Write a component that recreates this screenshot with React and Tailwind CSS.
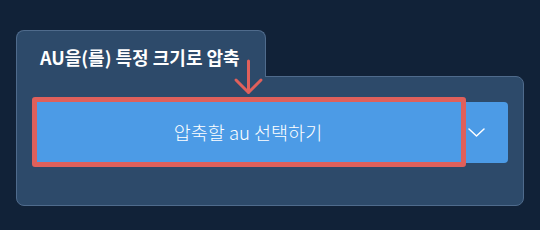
import React from 'react';

const ChevronDown = () => (
  <svg width="17" height="9" viewBox="0 0 17 9" fill="none">
    <polyline points="1,1 8.5,8 16,1" stroke="white" strokeWidth="1.5" strokeLinecap="round" strokeLinejoin="round" />
  </svg>
);

const DownArrow = () => (
  <svg width="31" height="36" viewBox="0 0 31 36" fill="none">
    <line x1="15.5" y1="2" x2="15.5" y2="33" stroke="#e0605b" strokeWidth="3" strokeLinecap="round" />
    <polyline points="3,21 15.5,33.5 28,21" stroke="#e0605b" strokeWidth="3" strokeLinecap="round" strokeLinejoin="round" />
  </svg>
);

const App = () => {
  return (
    <div
      className="w-[540px] h-[230px] bg-[#112238] pt-[30px] px-4"
      style={{ fontFamily: '"Noto Sans CJK KR", "Noto Sans", sans-serif' }}
    >
      <div className="relative w-[508px]">
        {/* tab */}
        <div className="relative z-10 -mb-px w-[250px] h-[47px] rounded-t-lg border border-b-0 border-[#4f6b8c] bg-[#2d4a6a] pl-[23px] pt-[14px]">
          <span className="block text-[18px] leading-[24px] font-bold text-white whitespace-nowrap">
            AU을(를) 특정 크기로 압축
          </span>
        </div>

        {/* panel */}
        <div className="rounded-b-lg rounded-tr-lg border border-[#4f6b8c] bg-[#2d4a6a] px-[15px] pt-[25px] pb-[42px]">
          <div className="relative flex h-[61px] rounded-[4px] bg-[#4c9be6]">
            <div className="flex w-[429px] items-center justify-center pl-[3px] text-[18.5px] font-light text-white">
              압축할 au 선택하기
            </div>
            <div className="flex flex-1 items-center pl-[7px]">
              <ChevronDown />
            </div>
            <div className="absolute left-0 top-[-5px] w-[434px] h-[70px] rounded-[3px] border-[5px] border-[#df605b]" />
          </div>
        </div>

        <div className="absolute left-[217px] top-[29px] z-20">
          <DownArrow />
        </div>
      </div>
    </div>
  );
};

export default App;
